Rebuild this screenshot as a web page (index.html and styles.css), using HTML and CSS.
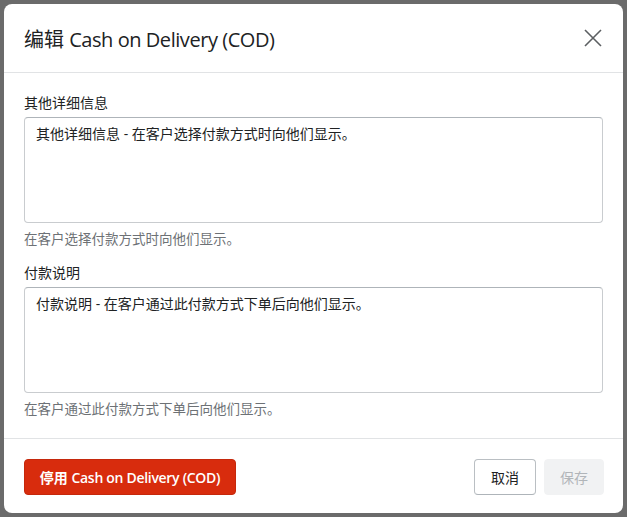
FILE: index.html
```html
<!DOCTYPE html>
<html lang="zh-CN">
<head>
<meta charset="utf-8">
<title>编辑 Cash on Delivery (COD)</title>
<link rel="stylesheet" href="styles.css">
</head>
<body>
<div class="modal">
  <header class="modal-header">
    <h2 class="modal-title">编辑 <span class="latin">Cash on Delivery (COD)</span></h2>
    <button class="close" aria-label="关闭">
      <svg width="18" height="18" viewBox="0 0 18 18"><path d="M1 1 L17 17 M17 1 L1 17" stroke="#5c5f62" stroke-width="1.6" fill="none"/></svg>
    </button>
  </header>
  <div class="modal-body">
    <div class="field">
      <label class="label">其他详细信息</label>
      <div class="textarea">其他详细信息 - 在客户选择付款方式时向他们显示。</div>
      <p class="help">在客户选择付款方式时向他们显示。</p>
    </div>
    <div class="field">
      <label class="label">付款说明</label>
      <div class="textarea">付款说明 - 在客户通过此付款方式下单后向他们显示。</div>
      <p class="help">在客户通过此付款方式下单后向他们显示。</p>
    </div>
  </div>
  <footer class="modal-footer">
    <button class="btn btn-danger">停用 <span class="latin">Cash on Delivery (COD)</span></button>
    <div class="actions">
      <button class="btn btn-plain">取消</button>
      <button class="btn btn-disabled">保存</button>
    </div>
  </footer>
</div>
</body>
</html>
```

FILE: styles.css
```css
html, body {
  margin: 0;
  padding: 0;
}

body {
  width: 627px;
  height: 517px;
  background: #6b6b6b;
  padding: 4px;
  box-sizing: border-box;
  font-family: "Open Sans", "Noto Sans CJK SC", sans-serif;
  color: #202223;
}

.modal {
  background: #fff;
  border-radius: 8px;
  height: 509px;
  width: 619px;
  display: flex;
  flex-direction: column;
  overflow: hidden;
}

.modal-header,
.modal-body,
.modal-footer {
  flex-shrink: 0;
}

.modal-header {
  height: 69px;
  box-sizing: border-box;
  display: flex;
  align-items: center;
  justify-content: space-between;
  padding: 0 20px 0 20px;
  border-bottom: 1px solid #e1e3e5;
}

.modal-title {
  margin: 0;
  padding-top: 3px;
  font-size: 20px;
  font-weight: 400;
  line-height: 28px;
  color: #202223;
}

.modal-title .latin {
  letter-spacing: -0.45px;
}

.close {
  border: 0;
  background: none;
  padding: 0;
  width: 20px;
  height: 20px;
  display: flex;
  align-items: center;
  justify-content: center;
}

.modal-body {
  padding: 20px 20px 19px;
  display: flex;
  flex-direction: column;
  gap: 14px;
  border-bottom: 1px solid #e1e3e5;
}

.field {
  display: flex;
  flex-direction: column;
}

.label {
  font-size: 14px;
  line-height: 20px;
  margin-bottom: 4px;
  color: #202223;
}

.textarea {
  height: 106px;
  box-sizing: border-box;
  border: 1px solid #c9cccf;
  border-top-color: #aeb4b9;
  border-radius: 4px;
  padding: 6px 11px;
  font-size: 14px;
  line-height: 20px;
  color: #202223;
}

.help {
  margin: 6px 0 0;
  font-size: 13.5px;
  line-height: 20px;
  color: #6d7175;
}

.modal-footer {
  padding: 20px 19px 18px 20px;
  display: flex;
  justify-content: space-between;
  align-items: center;
}

.actions {
  display: flex;
  gap: 8px;
}

.btn {
  height: 36px;
  box-sizing: border-box;
  border-radius: 4px;
  font-family: inherit;
  font-size: 14px;
  padding: 0 8px;
  white-space: nowrap;
  cursor: pointer;
}

.btn-danger {
  width: 212px;
  background: #d82c0d;
  border: 1px solid #c5280c;
  color: #fff;
  font-weight: 600;
}

.btn-danger .latin {
  letter-spacing: -0.3px;
}

.btn-plain {
  width: 62px;
  background: #fff;
  border: 1px solid #babfc3;
  border-bottom-color: #aeb4b9;
  color: #202223;
}

.btn-disabled {
  width: 60px;
  background: #f1f2f3;
  border: 1px solid #f1f2f3;
  color: #b1b5b9;
}
```
